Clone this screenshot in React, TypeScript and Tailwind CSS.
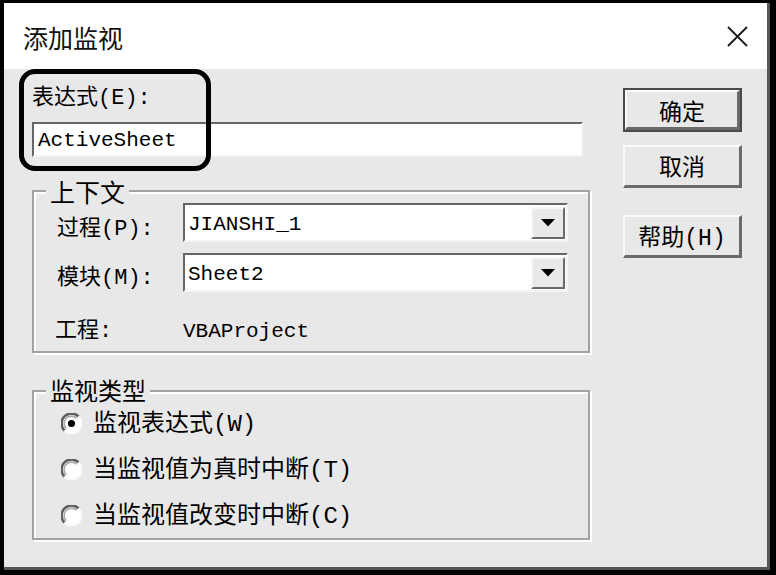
import React from "react";

const cjk = "font-['Noto_Sans_CJK_SC',sans-serif]";
const mixed = "font-['Liberation_Mono','Noto_Sans_CJK_SC',monospace]";

function Radio({ checked }: { checked?: boolean }) {
  return (
    <svg width="21" height="21" viewBox="0 0 20 20" className="shrink-0">
      <circle cx="10" cy="10" r="9" fill="#ffffff" />
      <path d="M 3.3 16.7 A 9.2 9.2 0 0 1 16.7 3.3" fill="none" stroke="#5e5e5e" strokeWidth="2.4" />
      <path d="M 5.0 15.0 A 7 7 0 0 1 15.0 5.0" fill="none" stroke="#a8a8a8" strokeWidth="1.6" />
      <path d="M 16.7 3.3 A 9.2 9.2 0 0 1 3.3 16.7" fill="none" stroke="#fbfbfb" strokeWidth="2" />
      {checked && <circle cx="10" cy="10" r="3.4" fill="#000000" />}
    </svg>
  );
}

function Combo({ value }: { value: string }) {
  return (
    <div className="w-[385px] h-[39px] flex items-center bg-white border-2 border-t-[#666666] border-l-[#666666] border-r-[#f4f4f4] border-b-[#f4f4f4]">
      <div className="flex-1 pl-[3px] pt-[4px] font-['Liberation_Mono',monospace] text-[21px] leading-[24px] text-black">
        {value}
      </div>
      <div className="w-[34px] h-[32px] mr-[1px] mt-[1px] flex items-center justify-center bg-[#e8e8e8] border-2 border-t-[#f6f6f6] border-l-[#f6f6f6] border-r-[#6a6a6a] border-b-[#6a6a6a]">
        <svg width="14" height="8" viewBox="0 0 14 8">
          <polygon points="0,0 14,0 7,7.5" fill="#000000" />
        </svg>
      </div>
    </div>
  );
}

function Button({ label, isDefault, pt }: { label: string; isDefault?: boolean; pt: string }) {
  const inner = (
    <div
      className={`w-full h-full flex items-center justify-center ${pt} bg-[#e8e8e8] border-t-2 border-l-2 border-t-[#fbfbfb] border-l-[#fbfbfb] border-r-[3px] border-b-[3px] border-r-[#6a6a6a] border-b-[#6a6a6a] ${mixed} text-[23px] leading-[26px] text-black`}
    >
      {label}
    </div>
  );
  if (isDefault) {
    return (
      <div className="w-[119px] h-[44px] border-2 border-[#4a4a4a]">{inner}</div>
    );
  }
  return <div className="w-[119px] h-[43px]">{inner}</div>;
}

export default function App() {
  return (
    <div className={`w-[776px] h-[575px] bg-black pt-[3px] pl-[4px] pr-[6px] pb-[5px] ${cjk} text-black`}>
      <div className="w-full h-full flex flex-col border-r-[3px] border-b-[3px] border-[#555555] bg-[#e8e8e8]">
        {/* Title bar */}
        <div className="h-[66px] shrink-0 bg-white flex items-center justify-between pl-[19px] pr-[19px]">
          <span className="text-[25px] leading-[28px] pt-[2px] text-[#111111]">添加监视</span>
          <svg width="21" height="21" viewBox="0 0 21 21">
            <path d="M1 1 L20 20 M20 1 L1 20" stroke="#1a1a1a" strokeWidth="1.8" />
          </svg>
        </div>

        {/* Body */}
        <div className="flex-1 relative flex items-start pl-[28px]">
          {/* Left column */}
          <div className="w-[558px] pt-[16px] flex flex-col">
            <div className={`h-[24px] pt-[2px] ${mixed} text-[22px] leading-[24px]`}>表达式(E):</div>
            <div className="mt-[13px] w-[551px] h-[35px] flex items-center bg-white border-2 border-t-[#666666] border-l-[#666666] border-r-[#f4f4f4] border-b-[#f4f4f4]">
              <span className="pl-[4px] pt-[3px] font-['Liberation_Mono',monospace] text-[21px] leading-[24px]">ActiveSheet</span>
            </div>

            {/* Group: context */}
            <div className="relative mt-[33px] h-[163px] border-2 border-[#a2a2a2] shadow-[2px_2px_0_#ffffff,inset_2px_2px_0_#ffffff] pt-[11px] pl-[23px]">
              <div className="absolute -top-[15px] left-[12px] px-[4px] bg-[#e8e8e8] text-[25px] leading-[28px]">上下文</div>
              <div className="flex items-center h-[39px]">
                <div className={`w-[126px] pt-[14px] ${mixed} text-[22px] leading-[24px]`}>过程(P):</div>
                <Combo value="JIANSHI_1" />
              </div>
              <div className="flex items-center h-[39px] mt-[11px]">
                <div className={`w-[126px] pt-[12px] ${mixed} text-[22px] leading-[24px]`}>模块(M):</div>
                <Combo value="Sheet2" />
              </div>
              <div className="flex items-center h-[24px] mt-[26px]">
                <div className={`w-[126px] -ml-[2px] pt-[4px] ${mixed} text-[22px] leading-[24px]`}>工程:</div>
                <div className="pl-[2px] pt-[4px] font-['Liberation_Mono',monospace] text-[21px] leading-[24px]">VBAProject</div>
              </div>
            </div>

            {/* Group: watch type */}
            <div className="relative mt-[37px] h-[150px] border-2 border-[#a2a2a2] shadow-[2px_2px_0_#ffffff,inset_2px_2px_0_#ffffff] pt-[16px] pl-[27px]">
              <div className="absolute -top-[16px] left-[12px] px-[4px] bg-[#e8e8e8] text-[24px] leading-[28px]">监视类型</div>
              <div className="flex items-center h-[30px] gap-[11px]">
                <Radio checked />
                <span className={`pt-[4px] ${mixed} text-[24px] leading-[26px]`}>监视表达式(W)</span>
              </div>
              <div className="flex items-center h-[30px] gap-[11px] mt-[16px]">
                <Radio />
                <span className={`pt-[4px] ${mixed} text-[24px] leading-[26px]`}>当监视值为真时中断(T)</span>
              </div>
              <div className="flex items-center h-[30px] gap-[11px] mt-[16px]">
                <Radio />
                <span className={`pt-[4px] ${mixed} text-[24px] leading-[26px]`}>当监视值改变时中断(C)</span>
              </div>
            </div>
          </div>

          {/* Right column */}
          <div className="ml-[33px] pt-[19px] w-[119px] flex flex-col">
            <Button label="确定" isDefault pt="pt-[9px]" />
            <div className="mt-[13px]">
              <Button label="取消" pt="pt-[5px]" />
            </div>
            <div className="mt-[27px]">
              <Button label="帮助(H)" pt="pt-[5px]" />
            </div>
          </div>

          {/* Annotation highlight */}
          <div className="absolute left-[15px] top-0 w-[192px] h-[102px] border-[5px] border-black rounded-[16px] pointer-events-none" />
        </div>
      </div>
    </div>
  );
}
